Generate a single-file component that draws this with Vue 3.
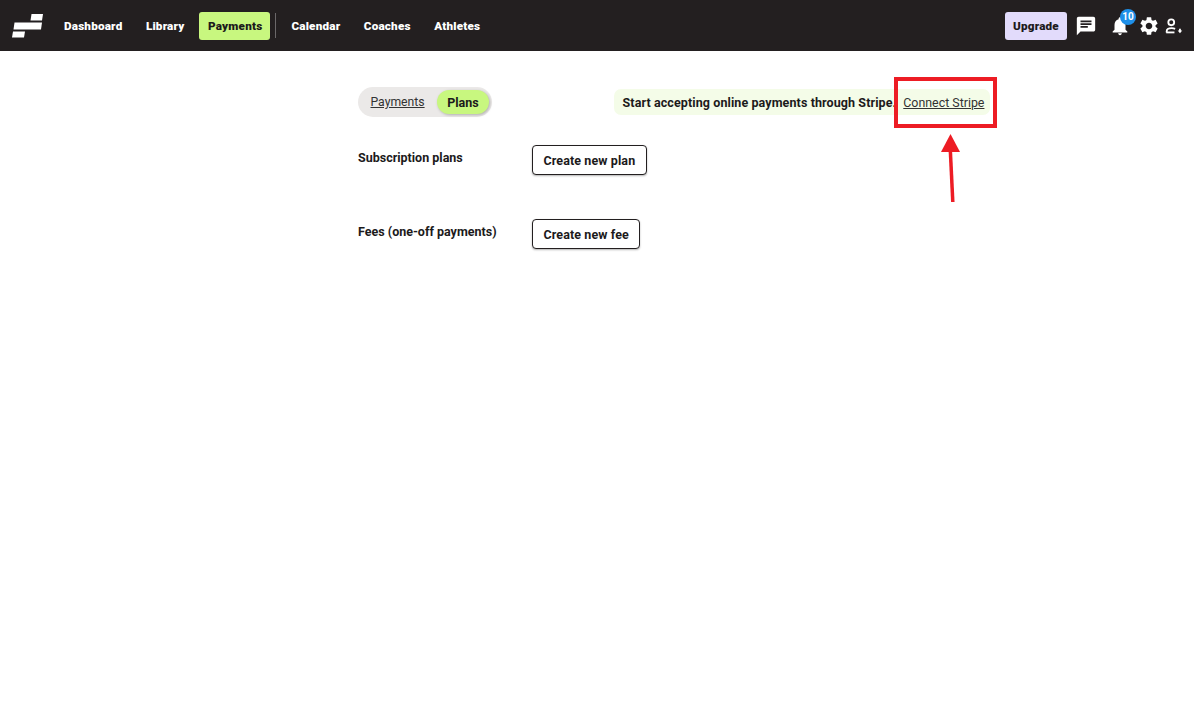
<script setup>
const navLeft = [
  { label: 'Dashboard' },
  { label: 'Library' },
  { label: 'Payments', active: true },
]
const navRight = ['Calendar', 'Coaches', 'Athletes']
const sections = [
  { title: 'Subscription plans', action: 'Create new plan' },
  { title: 'Fees (one-off payments)', action: 'Create new fee' },
]
</script>

<template>
  <div class="page">
    <header class="topbar">
      <svg class="logo" width="32" height="24" viewBox="0 0 32 24" aria-hidden="true">
        <polygon points="19.500,0 31,0 30,6.500 18.500,6.500" fill="#fff" />
        <polygon points="2.500,8.500 30,8.500 29,15.500 1.500,15.500" fill="#fff" />
        <polygon points="1,17.500 13,17.500 12,23.500 0,23.500" fill="#fff" />
      </svg>
      <nav class="nav">
        <a v-for="item in navLeft" :key="item.label" class="nav-link" :class="{ active: item.active }">{{ item.label }}</a>
        <span class="divider"></span>
        <a v-for="item in navRight" :key="item" class="nav-link">{{ item }}</a>
      </nav>
      <div class="tools">
        <button class="upgrade">Upgrade</button>
        <svg class="tool chat" width="24" height="24" viewBox="0 0 24 24" aria-hidden="true">
          <path fill="#fff" d="M20 2H4c-1.1 0-2 .9-2 2v18l4-4h14c1.1 0 2-.9 2-2V4c0-1.100-.9-2-2-2zM6 9h12v2H6V9zm8 5H6v-2h8v2zm4-6H6V6h12v2z" />
        </svg>
        <span class="bell-wrap">
          <svg class="tool" width="24" height="24" viewBox="0 0 24 24" aria-hidden="true">
            <path fill="#fff" d="M12 22c1.100 0 2-.9 2-2h-4c0 1.100.9 2 2 2zm6-6v-5c0-3.070-1.640-5.640-4.500-6.320V4c0-.83-.67-1.500-1.500-1.500s-1.500.67-1.500 1.500v.68C7.630 5.360 6 7.920 6 11v5l-2 2v1h16v-1l-2-2z" />
          </svg>
          <span class="badge">10</span>
        </span>
        <svg class="tool gear" width="24" height="24" viewBox="0 0 24 24" aria-hidden="true">
          <path fill="#fff" d="M19.140 12.940c.04-.3.060-.61.060-.94 0-.32-.02-.64-.07-.94l2.030-1.580c.18-.14.230-.41.120-.61l-1.920-3.320c-.12-.22-.37-.29-.59-.22l-2.390.96c-.5-.38-1.030-.7-1.620-.94l-.36-2.540c-.04-.24-.24-.41-.48-.41h-3.840c-.24 0-.43.170-.47.410l-.36 2.540c-.59.240-1.130.570-1.620.94l-2.390-.96c-.22-.08-.47 0-.59.220L2.740 8.870c-.12.210-.08.470.12.610l2.030 1.580c-.05.3-.09.630-.09.940s.02.640.07.940l-2.030 1.580c-.18.140-.23.410-.12.610l1.920 3.320c.12.220.37.290.59.220l2.390-.96c.5.380 1.030.7 1.620.94l.36 2.540c.05.240.24.410.48.410h3.840c.24 0 .44-.17.47-.41l.36-2.540c.59-.24 1.130-.56 1.620-.94l2.390.96c.22.080.47 0 .59-.22l1.920-3.320c.12-.22.070-.47-.12-.61l-2.010-1.580zM12 15.600c-1.980 0-3.600-1.620-3.600-3.600s1.620-3.600 3.600-3.600 3.600 1.620 3.600 3.600-1.620 3.600-3.600 3.600z" />
        </svg>
        <svg class="tool user" width="24" height="24" viewBox="0 0 24 24" aria-hidden="true">
          <circle cx="9" cy="8" r="3.200" fill="none" stroke="#fff" stroke-width="2" />
          <path d="M4 19v-1c0-2.400 2.600-3.600 5.500-3.600 1.400 0 2.700.3 3.700.8" fill="none" stroke="#fff" stroke-width="2" />
          <path d="M3.500 19h9" stroke="#fff" stroke-width="2" />
          <path d="M18.500 15v2.500" stroke="#fff" stroke-width="2" />
          <polygon points="16,17 21,17 18.500,20" fill="#fff" />
        </svg>
      </div>
    </header>

    <main class="content">
      <div class="top-row">
        <div class="switch">
          <a class="switch-link">Payments</a>
          <span class="switch-active">Plans</span>
        </div>
        <div class="notice">
          <strong>Start accepting online payments through Stripe.</strong>
          <a class="notice-link">Connect Stripe</a>
        </div>
      </div>
      <section v-for="section in sections" :key="section.title" class="section">
        <h2 class="section-title">{{ section.title }}</h2>
        <button class="outline-btn">{{ section.action }}</button>
      </section>
    </main>

    <svg class="annotation" width="1194" height="719" viewBox="0 0 1194 719" aria-hidden="true">
      <rect x="896" y="79" width="99" height="47" fill="none" stroke="#ed1c24" stroke-width="4" />
      <path d="M952.800 202 L950.300 150" stroke="#ed1c24" stroke-width="3.500" fill="none" />
      <polygon points="950.500,134 941,152 960,152" fill="#ed1c24" />
    </svg>
  </div>
</template>

<style scoped>
.page {
  position: relative;
  width: 1194px;
  height: 719px;
  overflow: hidden;
  background: #fff;
  font-family: Roboto, "Noto Sans", sans-serif;
  color: #1c1a1b;
}
.topbar {
  display: flex;
  align-items: center;
  height: 51px;
  box-sizing: border-box;
  padding: 0 9px 0 12px;
  background: #231f20;
}
.logo { flex: none; display: block; }
.nav {
  display: flex;
  align-items: center;
  margin-left: 11px;
}
.nav-link {
  display: block;
  padding: 0 9px;
  margin-right: 5.500px;
  font-size: 11.700px;
  line-height: 28px;
  color: #fff;
  border-radius: 3px;
  font-weight: 900;
  letter-spacing: 0.200px;
}
.nav-link.active {
  padding: 0 8px 0 9px;
  margin-right: 5px;
  background: #c8f77f;
  color: #1c1a1b;
}
.divider {
  width: 1px;
  height: 25px;
  background: #6b6869;
  margin-right: 6px;
}
.tools {
  margin-left: auto;
  display: flex;
  align-items: center;
}
.upgrade {
  width: 62px;
  height: 28px;
  padding: 0;
  border: 0;
  border-radius: 3px;
  background: #e2dbfb;
  color: #1c1a1b;
  font: 900 11.700px/28px Roboto, sans-serif;
  letter-spacing: 0.200px;
  margin-right: 8px;
}
.tool { display: block; width: 22px; height: 22px; }
.chat { margin-right: 12px; }
.bell-wrap { position: relative; display: block; }
.badge {
  position: absolute;
  top: -6px;
  right: -5px;
  width: 16px;
  height: 16px;
  border-radius: 50%;
  background: #1e8fe8;
  color: #fff;
  font: 700 10px/16px Roboto, sans-serif;
  text-align: center;
}
.gear { margin-left: 7px; }
.user { margin-left: 3px; }
.content {
  width: 640px;
  margin-left: 358px;
  padding-top: 36px;
}
.top-row {
  display: flex;
  align-items: center;
  height: 30px;
}
.switch {
  display: flex;
  align-items: center;
  width: 134px;
  height: 30px;
  box-sizing: border-box;
  padding: 0 3px 0 12.500px;
  border-radius: 15px;
  background: #ebe9e8;
}
.switch-link {
  font-size: 12.200px;
  color: #333;
  text-decoration: underline;
}
.switch-active {
  margin-left: auto;
  width: 52px;
  height: 24px;
  border-radius: 12px;
  background: #c8f77f;
  box-shadow: 1px 1px 3px rgba(0, 0, 0, 0.25);
  font-size: 12.500px;
  line-height: 26px;
  font-weight: 700;
  text-align: center;
}
.notice {
  display: flex;
  align-items: center;
  margin-left: 122px;
  width: 376px;
  height: 26px;
  box-sizing: border-box;
  padding-left: 8.500px;
  border-radius: 7px;
  background: #f4fce8;
  font-size: 12.500px;
  white-space: nowrap;
}
.notice strong { font-weight: 700; letter-spacing: 0.100px; }
.notice-link {
  margin-left: 7px;
  font-size: 12.400px;
  color: #333;
  text-decoration: underline;
}
.section {
  display: flex;
  align-items: flex-start;
  height: 74px;
}
.section:first-of-type { margin-top: 28px; }
.section-title {
  width: 174px;
  margin: 6px 0 0;
  font-size: 12.500px;
  line-height: 14px;
  font-weight: 700;
}
.outline-btn {
  height: 30px;
  box-sizing: border-box;
  padding: 2px 10.500px 0;
  border: 1px solid #231f20;
  border-radius: 4px;
  background: #fff;
  box-shadow: 0 1px 2px rgba(0, 0, 0, 0.3);
  color: #1c1a1b;
  font: 700 12.500px/26px Roboto, sans-serif;
  letter-spacing: 0.100px;
}
.annotation {
  position: absolute;
  inset: 0;
  pointer-events: none;
}
</style>
